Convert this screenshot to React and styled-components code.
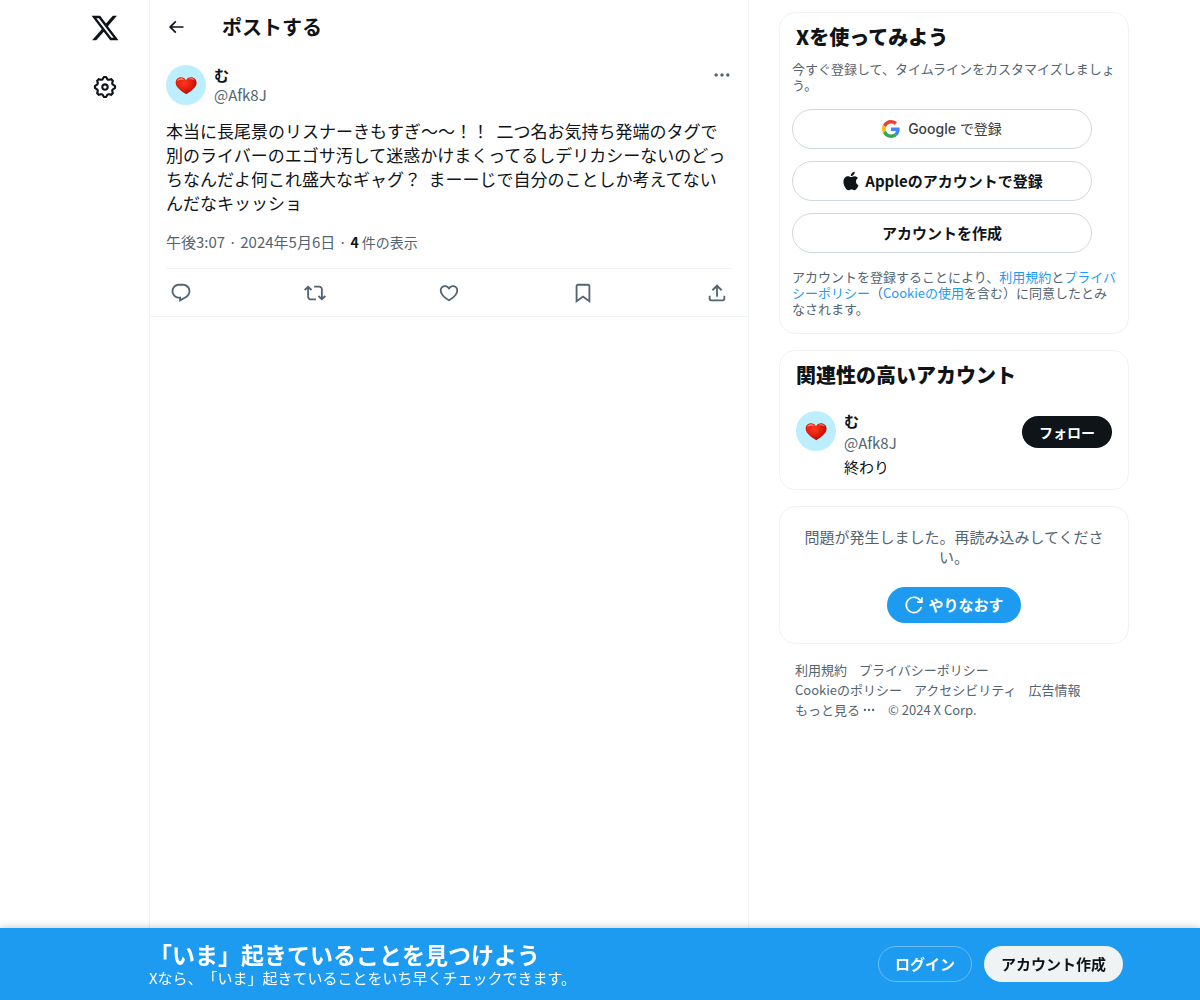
import React from "react";
import styled, { createGlobalStyle } from "styled-components";

const GlobalStyle = createGlobalStyle`
  *, *::before, *::after { box-sizing: border-box; }
  body {
    margin: 0;
    background: #fff;
    color: #0f1419;
    font-family: "Noto Sans CJK JP", sans-serif;
    font-size: 15px;
    line-height: 20px;
    text-spacing-trim: space-all;
  }
  h1, h2, p { margin: 0; }
  a { color: inherit; text-decoration: none; }
  button { font-family: inherit; cursor: pointer; }
`;

const Shell = styled.div`
  display: flex;
  width: 100%;
  max-width: 1058px;
  min-height: 100vh;
  margin: 0 auto;
`;

const Nav = styled.nav`
  display: flex;
  flex-direction: column;
  align-items: center;
  gap: 7px;
  flex: 0 0 68px;
  margin-right: 10px;
  padding-top: 2px;
`;

const NavLink = styled.a`
  display: flex;
  align-items: center;
  justify-content: center;
  width: 52px;
  height: 52px;
  border-radius: 50%;
`;

const Icon = styled.svg`
  display: block;
  flex: none;
  width: ${({ $size }) => $size}px;
  height: ${({ $size }) => $size}px;
  fill: ${({ $color }) => $color || "currentColor"};
`;

const IconButton = styled.button`
  display: flex;
  align-items: center;
  justify-content: center;
  padding: 0;
  border: 0;
  background: none;
  color: ${({ $muted }) => ($muted ? "#536471" : "#0f1419")};
`;

const Main = styled.main`
  flex: 0 1 600px;
  min-width: 0;
  border: solid #eff3f4;
  border-width: 0 1px;
`;

const TopBar = styled.header`
  display: flex;
  align-items: center;
  gap: 36px;
  height: 53px;
  padding: 0 16px;
`;

const PageTitle = styled.h1`
  font-size: 20px;
  font-weight: 700;
  line-height: 24px;
`;

const Post = styled.article`
  padding: 12px 16px 0;
  border-bottom: 1px solid #eff3f4;
`;

const Person = styled.div`
  display: flex;
  align-items: flex-start;
  gap: 8px;
  margin-top: ${({ $top }) => $top || 0}px;
`;

const PersonText = styled.div`
  display: flex;
  flex-direction: column;
  flex: 1;
  min-width: 0;
  gap: ${({ $gap }) => $gap || 0}px;
`;

const Name = styled.a`
  font-weight: 700;
`;

const Handle = styled.a`
  color: #536471;
`;

const Bio = styled.p`
  padding-top: 2px;
`;

const PostText = styled.p`
  margin-top: 14px;
  font-size: 17px;
  line-height: 24px;
  white-space: pre-wrap;
`;

const PostMeta = styled.p`
  margin: 17px 0 16px;
  color: #536471;
`;

const ViewCount = styled.span`
  font-size: 14px;

  strong { color: #0f1419; }
`;

const Actions = styled.div`
  display: flex;
  align-items: center;
  justify-content: space-between;
  height: 48px;
  padding: 0 4px;
  border-top: 1px solid #eff3f4;
`;

const Sidebar = styled.aside`
  display: flex;
  flex-direction: column;
  gap: 16px;
  flex: 0 0 350px;
  margin-left: 30px;
  padding: 12px 0 96px;
`;

const Card = styled.section`
  padding: ${({ $pad }) => $pad};
  border: 1px solid #eff3f4;
  border-radius: 16px;
`;

const CardTitle = styled.h2`
  padding: 0 ${({ $inset }) => $inset || 0}px;
  font-size: 20px;
  font-weight: 800;
  line-height: 24px;
`;

const Small = styled.p`
  margin-top: 12px;
  color: #536471;
  font-size: 13px;
  line-height: 16px;
`;

const BlueLink = styled.a`
  color: #1d9bf0;
`;

const SignupButtons = styled.div`
  display: flex;
  flex-direction: column;
  gap: 12px;
  max-width: 300px;
  margin: 16px 0;
`;

const Pill = styled.button`
  display: flex;
  align-items: center;
  justify-content: center;
  gap: 4px;
  height: ${({ $height }) => $height || 36}px;
  padding: 0 16px;
  border: 1px solid ${({ $border }) => $border || "transparent"};
  border-radius: 20px;
  background: ${({ $bg }) => $bg || "#fff"};
  color: ${({ $color }) => $color || "#0f1419"};
  font-size: ${({ $size }) => $size || 15}px;
  font-weight: 700;
  line-height: 20px;
  white-space: nowrap;
`;

const GooglePill = styled(Pill)`
  gap: 8px;
  color: #3c4043;
  font-family: Inter, "Noto Sans CJK JP", sans-serif;
  font-size: 14px;
  font-weight: 400;
`;

const Brand = styled.span`
  font-weight: 500;
`;

const FollowPill = styled(Pill)`
  margin-top: 5px;
`;

const ErrorText = styled.p`
  margin-bottom: 20px;
  color: #536471;
  text-align: center;
`;

const Centered = styled.div`
  display: flex;
  justify-content: center;
`;

const FooterLinks = styled.nav`
  display: flex;
  flex-wrap: wrap;
  padding: 0 16px;
  color: #536471;
  font-size: 13px;
  line-height: 20px;
`;

const FooterLink = styled.a`
  display: flex;
  align-items: center;
  gap: 2px;
  padding-right: 12px;
`;

const Banner = styled.div`
  position: fixed;
  right: 0;
  bottom: 0;
  left: 0;
  background: #1d9bf0;
  color: #fff;
  box-shadow: 0 0 8px rgba(0, 0, 0, 0.25);
`;

const BannerInner = styled.div`
  display: flex;
  align-items: center;
  justify-content: space-between;
  width: 100%;
  max-width: 1058px;
  height: 72px;
  margin: 0 auto;
  padding: 0 6px 0 78px;
`;

const BannerTitle = styled.h2`
  font-size: 23px;
  font-weight: 700;
  line-height: 28px;
`;

const BannerButtons = styled.div`
  display: flex;
  gap: 12px;
`;

const paths = {
  logo: "M18.244 2.25h3.308l-7.227 8.26 8.502 11.24H16.17l-5.214-6.817L4.99 21.75H1.68l7.73-8.835L1.254 2.25H8.08l4.713 6.231zm-1.161 17.52h1.833L7.084 4.126H5.117z",
  settings: "M10.54 1.75h2.92l1.57 2.36c.11.17.32.25.53.21l2.53-.59 2.17 2.17-.58 2.54c-.05.2.04.41.21.53l2.36 1.57v2.92l-2.36 1.57c-.17.12-.26.33-.21.53l.58 2.54-2.17 2.17-2.53-.59c-.21-.04-.42.04-.53.21l-1.57 2.36h-2.92l-1.58-2.36c-.11-.17-.32-.25-.52-.21l-2.54.59-2.17-2.17.58-2.54c.05-.2-.03-.41-.21-.53l-2.35-1.57v-2.92L4.1 8.97c.18-.12.26-.33.21-.53L3.73 5.9 5.9 3.73l2.54.59c.2.04.41-.04.52-.21l1.58-2.36zm1.07 2l-.98 1.47C10.05 6.08 9 6.5 7.99 6.27l-1.46-.34-.6.6.33 1.46c.24 1.01-.18 2.07-1.05 2.64l-1.46.98v.78l1.46.98c.87.57 1.29 1.63 1.05 2.64l-.33 1.46.6.6 1.46-.34c1.01-.23 2.06.19 2.64 1.05l.98 1.47h.78l.97-1.47c.58-.86 1.63-1.28 2.65-1.05l1.45.34.61-.6-.34-1.46c-.23-1.01.18-2.07 1.05-2.64l1.47-.98v-.78l-1.47-.98c-.87-.57-1.28-1.63-1.05-2.64l.34-1.46-.61-.6-1.45.34c-1.02.23-2.07-.19-2.65-1.05l-.97-1.47h-.78zM12 10.5c-.83 0-1.5.67-1.5 1.5s.67 1.5 1.5 1.5c.83 0 1.5-.67 1.5-1.5s-.67-1.5-1.5-1.5zM8.5 12c0-1.93 1.56-3.5 3.5-3.5 1.93 0 3.5 1.57 3.5 3.5s-1.57 3.5-3.5 3.5c-1.94 0-3.5-1.57-3.5-3.5z",
  back: "M7.414 13l5.043 5.04-1.414 1.42L3.586 12l7.457-7.46 1.414 1.42L7.414 11H21v2H7.414z",
  more: "M3 12c0-1.1.9-2 2-2s2 .9 2 2-.9 2-2 2-2-.9-2-2zm9 2c1.1 0 2-.9 2-2s-.9-2-2-2-2 .9-2 2 .9 2 2 2zm7 0c1.1 0 2-.9 2-2s-.9-2-2-2-2 .9-2 2 .9 2 2 2z",
  reply: "M1.751 10c0-4.42 3.584-8 8.005-8h4.366c4.49 0 8.129 3.64 8.129 8.13 0 2.96-1.607 5.68-4.196 7.11l-8.054 4.46v-3.69h-.067c-4.49.1-8.183-3.51-8.183-8.01zm8.005-6c-3.317 0-6.005 2.69-6.005 6 0 3.37 2.77 6.08 6.138 6.01l.351-.01h1.761v2.3l5.087-2.81c1.951-1.08 3.163-3.13 3.163-5.36 0-3.39-2.744-6.13-6.129-6.13H9.756z",
  repost: "M4.5 3.88l4.432 4.14-1.364 1.46L5.5 7.55V16c0 1.1.896 2 2 2H13v2H7.5c-2.209 0-4-1.79-4-4V7.55L1.432 9.48.068 8.02 4.5 3.88zM16.5 6H11V4h5.5c2.209 0 4 1.79 4 4v8.45l2.068-1.93 1.364 1.46-4.432 4.14-4.432-4.14 1.364-1.46 2.068 1.93V8c0-1.1-.896-2-2-2z",
  like: "M16.697 5.5c-1.222-.06-2.679.51-3.89 2.16l-.805 1.09-.806-1.09C9.984 6.01 8.526 5.44 7.304 5.5c-1.243.07-2.349.78-2.91 1.91-.552 1.12-.633 2.78.479 4.82 1.074 1.97 3.257 4.27 7.129 6.61 3.87-2.34 6.052-4.64 7.126-6.61 1.111-2.04 1.03-3.7.477-4.82-.561-1.13-1.666-1.84-2.908-1.91zm4.187 7.69c-1.351 2.48-4.001 5.12-8.379 7.67l-.503.3-.504-.3c-4.379-2.55-7.029-5.19-8.382-7.67-1.36-2.5-1.41-4.86-.514-6.67.887-1.79 2.647-2.91 4.601-3.01 1.651-.09 3.368.56 4.798 2.01 1.429-1.45 3.146-2.1 4.796-2.01 1.954.1 3.714 1.22 4.601 3.01.896 1.81.846 4.17-.514 6.67z",
  bookmark: "M4 4.5C4 3.12 5.119 2 6.5 2h11C18.881 2 20 3.12 20 4.5v18.44l-8-5.71-8 5.71V4.5zM6.5 4c-.276 0-.5.22-.5.5v14.56l6-4.29 6 4.29V4.5c0-.28-.224-.5-.5-.5h-11z",
  share: "M12 2.59l5.7 5.7-1.41 1.42L13 6.41V16h-2V6.41l-3.3 3.3-1.41-1.42L12 2.59zM21 15l-.02 3.51c0 1.38-1.12 2.49-2.5 2.49H5.5C4.11 21 3 19.88 3 18.5V15h2v3.5c0 .28.22.5.5.5h12.98c.28 0 .5-.22.5-.5L19 15h2z",
  apple: "M16.365 1.43c0 1.14-.493 2.27-1.177 3.08-.744.9-1.99 1.57-2.987 1.57-.12 0-.23-.02-.3-.03-.01-.06-.04-.22-.04-.39 0-1.15.572-2.27 1.206-2.98.804-.94 2.142-1.64 3.248-1.68.03.13.05.28.05.43zm4.565 15.71c-.03.07-.463 1.58-1.518 3.12-.945 1.34-1.94 2.71-3.43 2.71-1.517 0-1.9-.88-3.63-.88-1.698 0-2.302.91-3.67.91-1.377 0-2.332-1.26-3.428-2.8-1.287-1.82-2.323-4.63-2.323-7.28 0-4.28 2.797-6.55 5.552-6.55 1.448 0 2.675.95 3.6.95.865 0 2.222-1.01 3.902-1.01.613 0 2.886.06 4.374 2.19-.13.09-2.383 1.37-2.383 4.19 0 3.26 2.854 4.42 2.955 4.45z",
};

function Glyph({ name, size, color }) {
  return (
    <Icon viewBox="0 0 24 24" $size={size} $color={color} aria-hidden="true">
      <path d={paths[name]} />
    </Icon>
  );
}

function GoogleMark() {
  return (
    <Icon viewBox="0 0 48 48" $size={18} aria-hidden="true">
      <path fill="#EA4335" d="M24 9.5c3.54 0 6.71 1.22 9.21 3.6l6.85-6.85C35.9 2.38 30.47 0 24 0 14.62 0 6.51 5.38 2.56 13.22l7.98 6.19C12.43 13.72 17.74 9.5 24 9.5z" />
      <path fill="#4285F4" d="M46.98 24.55c0-1.57-.15-3.09-.38-4.55H24v9.02h12.94c-.58 2.96-2.26 5.48-4.78 7.18l7.73 6c4.51-4.18 7.09-10.36 7.09-17.65z" />
      <path fill="#FBBC05" d="M10.53 28.59c-.48-1.45-.76-2.99-.76-4.59s.27-3.14.76-4.59l-7.98-6.19C.92 16.46 0 20.12 0 24c0 3.88.92 7.54 2.56 10.78l7.97-6.19z" />
      <path fill="#34A853" d="M24 48c6.48 0 11.93-2.13 15.89-5.81l-7.73-6c-2.15 1.45-4.92 2.3-8.16 2.3-6.26 0-11.57-4.22-13.47-9.91l-7.98 6.19C6.51 42.62 14.62 48 24 48z" />
    </Icon>
  );
}

function RetryMark() {
  return (
    <Icon viewBox="0 0 24 24" $size={20} $color="none" aria-hidden="true">
      <path d="M20.8 14.4A9.200 9.200 0 1 1 19.600 6.800" stroke="#fff" strokeWidth="2" />
      <path d="M21.500 2.800v5.700h-5.700M21.500 8.500l-3.500-3.500" stroke="#fff" strokeWidth="2" />
    </Icon>
  );
}

function Avatar({ id }) {
  return (
    <Icon viewBox="0 0 40 40" $size={40} role="img" aria-label="む">
      <defs>
        <radialGradient id={id} cx="0.4" cy="0.35" r="0.75">
          <stop offset="0" stopColor="#fb3a1e" />
          <stop offset="0.5" stopColor="#e41c0a" />
          <stop offset="1" stopColor="#8f0d0a" />
        </radialGradient>
      </defs>
      <circle cx="20" cy="20" r="20" fill="#bdeefe" />
      <path fill={`url(#${id})`} d="M20.300 29.300c-3.600-2.600-10.600-6.300-10.600-11.600 0-3.200 2.300-5.500 5.200-5.500 2.300 0 4.200 1.200 5.100 3.200.9-2 2.800-3.200 5.100-3.200 2.900 0 5.500 2.300 5.500 5.500 0 5.300-6.900 8.900-10.300 11.600z" />
      <path fill="#ffd0c4" opacity=".65" d="M11.200 16.300c.3-1.900 1.800-3 3.600-3 1.500 0 2.700.6 3.500 1.700-2.600-.5-5-.2-7.100 1.300zM22.300 14.500c1.300-1.300 3.400-1.500 4.900-.7.900.5 1.500 1.200 1.700 2-2-1.400-4.200-1.800-6.600-1.300z" />
    </Icon>
  );
}

const actions = [
  ["reply", "返信"],
  ["repost", "リポスト"],
  ["like", "いいね"],
  ["bookmark", "ブックマーク"],
  ["share", "共有"],
];

const footer = ["利用規約", "プライバシーポリシー", "Cookieのポリシー", "アクセシビリティ", "広告情報"];

export default function App() {
  return (
    <>
      <GlobalStyle />
      <Shell>
        <Nav>
          <NavLink href="#" aria-label="X"><Glyph name="logo" size={30} /></NavLink>
          <NavLink href="#" aria-label="設定"><Glyph name="settings" size={26} /></NavLink>
        </Nav>
        <Main>
          <TopBar>
            <IconButton aria-label="戻る"><Glyph name="back" size={20} /></IconButton>
            <PageTitle>ポストする</PageTitle>
          </TopBar>
          <Post>
            <Person>
              <Avatar id="post-heart" />
              <PersonText>
                <Name href="#">む</Name>
                <Handle href="#">@Afk8J</Handle>
              </PersonText>
              <IconButton $muted aria-label="もっと見る"><Glyph name="more" size={20} /></IconButton>
            </Person>
            <PostText>
              {"本当に長尾景のリスナーきもすぎ〜〜！！  二つ名お気持ち発端のタグで別のライバーのエゴサ汚して迷惑かけまくってるしデリカシーないのどっちなんだよ何これ盛大なギャグ？  まーーじで自分のことしか考えてないんだなキッッショ"}
            </PostText>
            <PostMeta>
              午後3:07 · 2024年5月6日 · <ViewCount><strong>4</strong> 件の表示</ViewCount>
            </PostMeta>
            <Actions>
              {actions.map(([name, label]) => (
                <IconButton key={name} $muted aria-label={label}>
                  <Glyph name={name} size={22} />
                </IconButton>
              ))}
            </Actions>
          </Post>
        </Main>
        <Sidebar>
          <Card $pad="12px 12px 16px">
            <CardTitle $inset={4}>Xを使ってみよう</CardTitle>
            <Small>今すぐ登録して、タイムラインをカスタマイズしましょう。</Small>
            <SignupButtons>
              <GooglePill $height={40} $border="#cfd9de">
                <GoogleMark />
                <span><Brand>Google</Brand> で登録</span>
              </GooglePill>
              <Pill $height={40} $border="#cfd9de"><Glyph name="apple" size={20} />Appleのアカウントで登録</Pill>
              <Pill $height={40} $border="#cfd9de">アカウントを作成</Pill>
            </SignupButtons>
            <Small>
              アカウントを登録することにより、<BlueLink href="#">利用規約</BlueLink>と<BlueLink href="#">プライバシーポリシー</BlueLink>（<BlueLink href="#">Cookieの使用</BlueLink>を含む）に同意したとみなされます。
            </Small>
          </Card>
          <Card $pad="12px 16px">
            <CardTitle>関連性の高いアカウント</CardTitle>
            <Person $top={24}>
              <Avatar id="card-heart" />
              <PersonText $gap={2}>
                <Name href="#">む</Name>
                <Handle href="#">@Afk8J</Handle>
                <Bio>終わり</Bio>
              </PersonText>
              <FollowPill $height={32} $size={14} $bg="#0f1419" $color="#fff">フォロー</FollowPill>
            </Person>
          </Card>
          <Card $pad="20px">
            <ErrorText>問題が発生しました。再読み込みしてください。</ErrorText>
            <Centered>
              <Pill $bg="#1d9bf0" $color="#fff"><RetryMark />やりなおす</Pill>
            </Centered>
          </Card>
          <FooterLinks aria-label="フッター">
            {footer.map((label) => <FooterLink href="#" key={label}>{label}</FooterLink>)}
            <FooterLink href="#">もっと見る<Glyph name="more" size={14} /></FooterLink>
            <span>© 2024 X Corp.</span>
          </FooterLinks>
        </Sidebar>
      </Shell>
      <Banner>
        <BannerInner>
          <div>
            <BannerTitle>「いま」起きていることを見つけよう</BannerTitle>
            <p>Xなら、「いま」起きていることをいち早くチェックできます。</p>
          </div>
          <BannerButtons>
            <Pill $bg="transparent" $border="#6bbdf5" $color="#fff">ログイン</Pill>
            <Pill $bg="#eff3f4">アカウント作成</Pill>
          </BannerButtons>
        </BannerInner>
      </Banner>
    </>
  );
}
